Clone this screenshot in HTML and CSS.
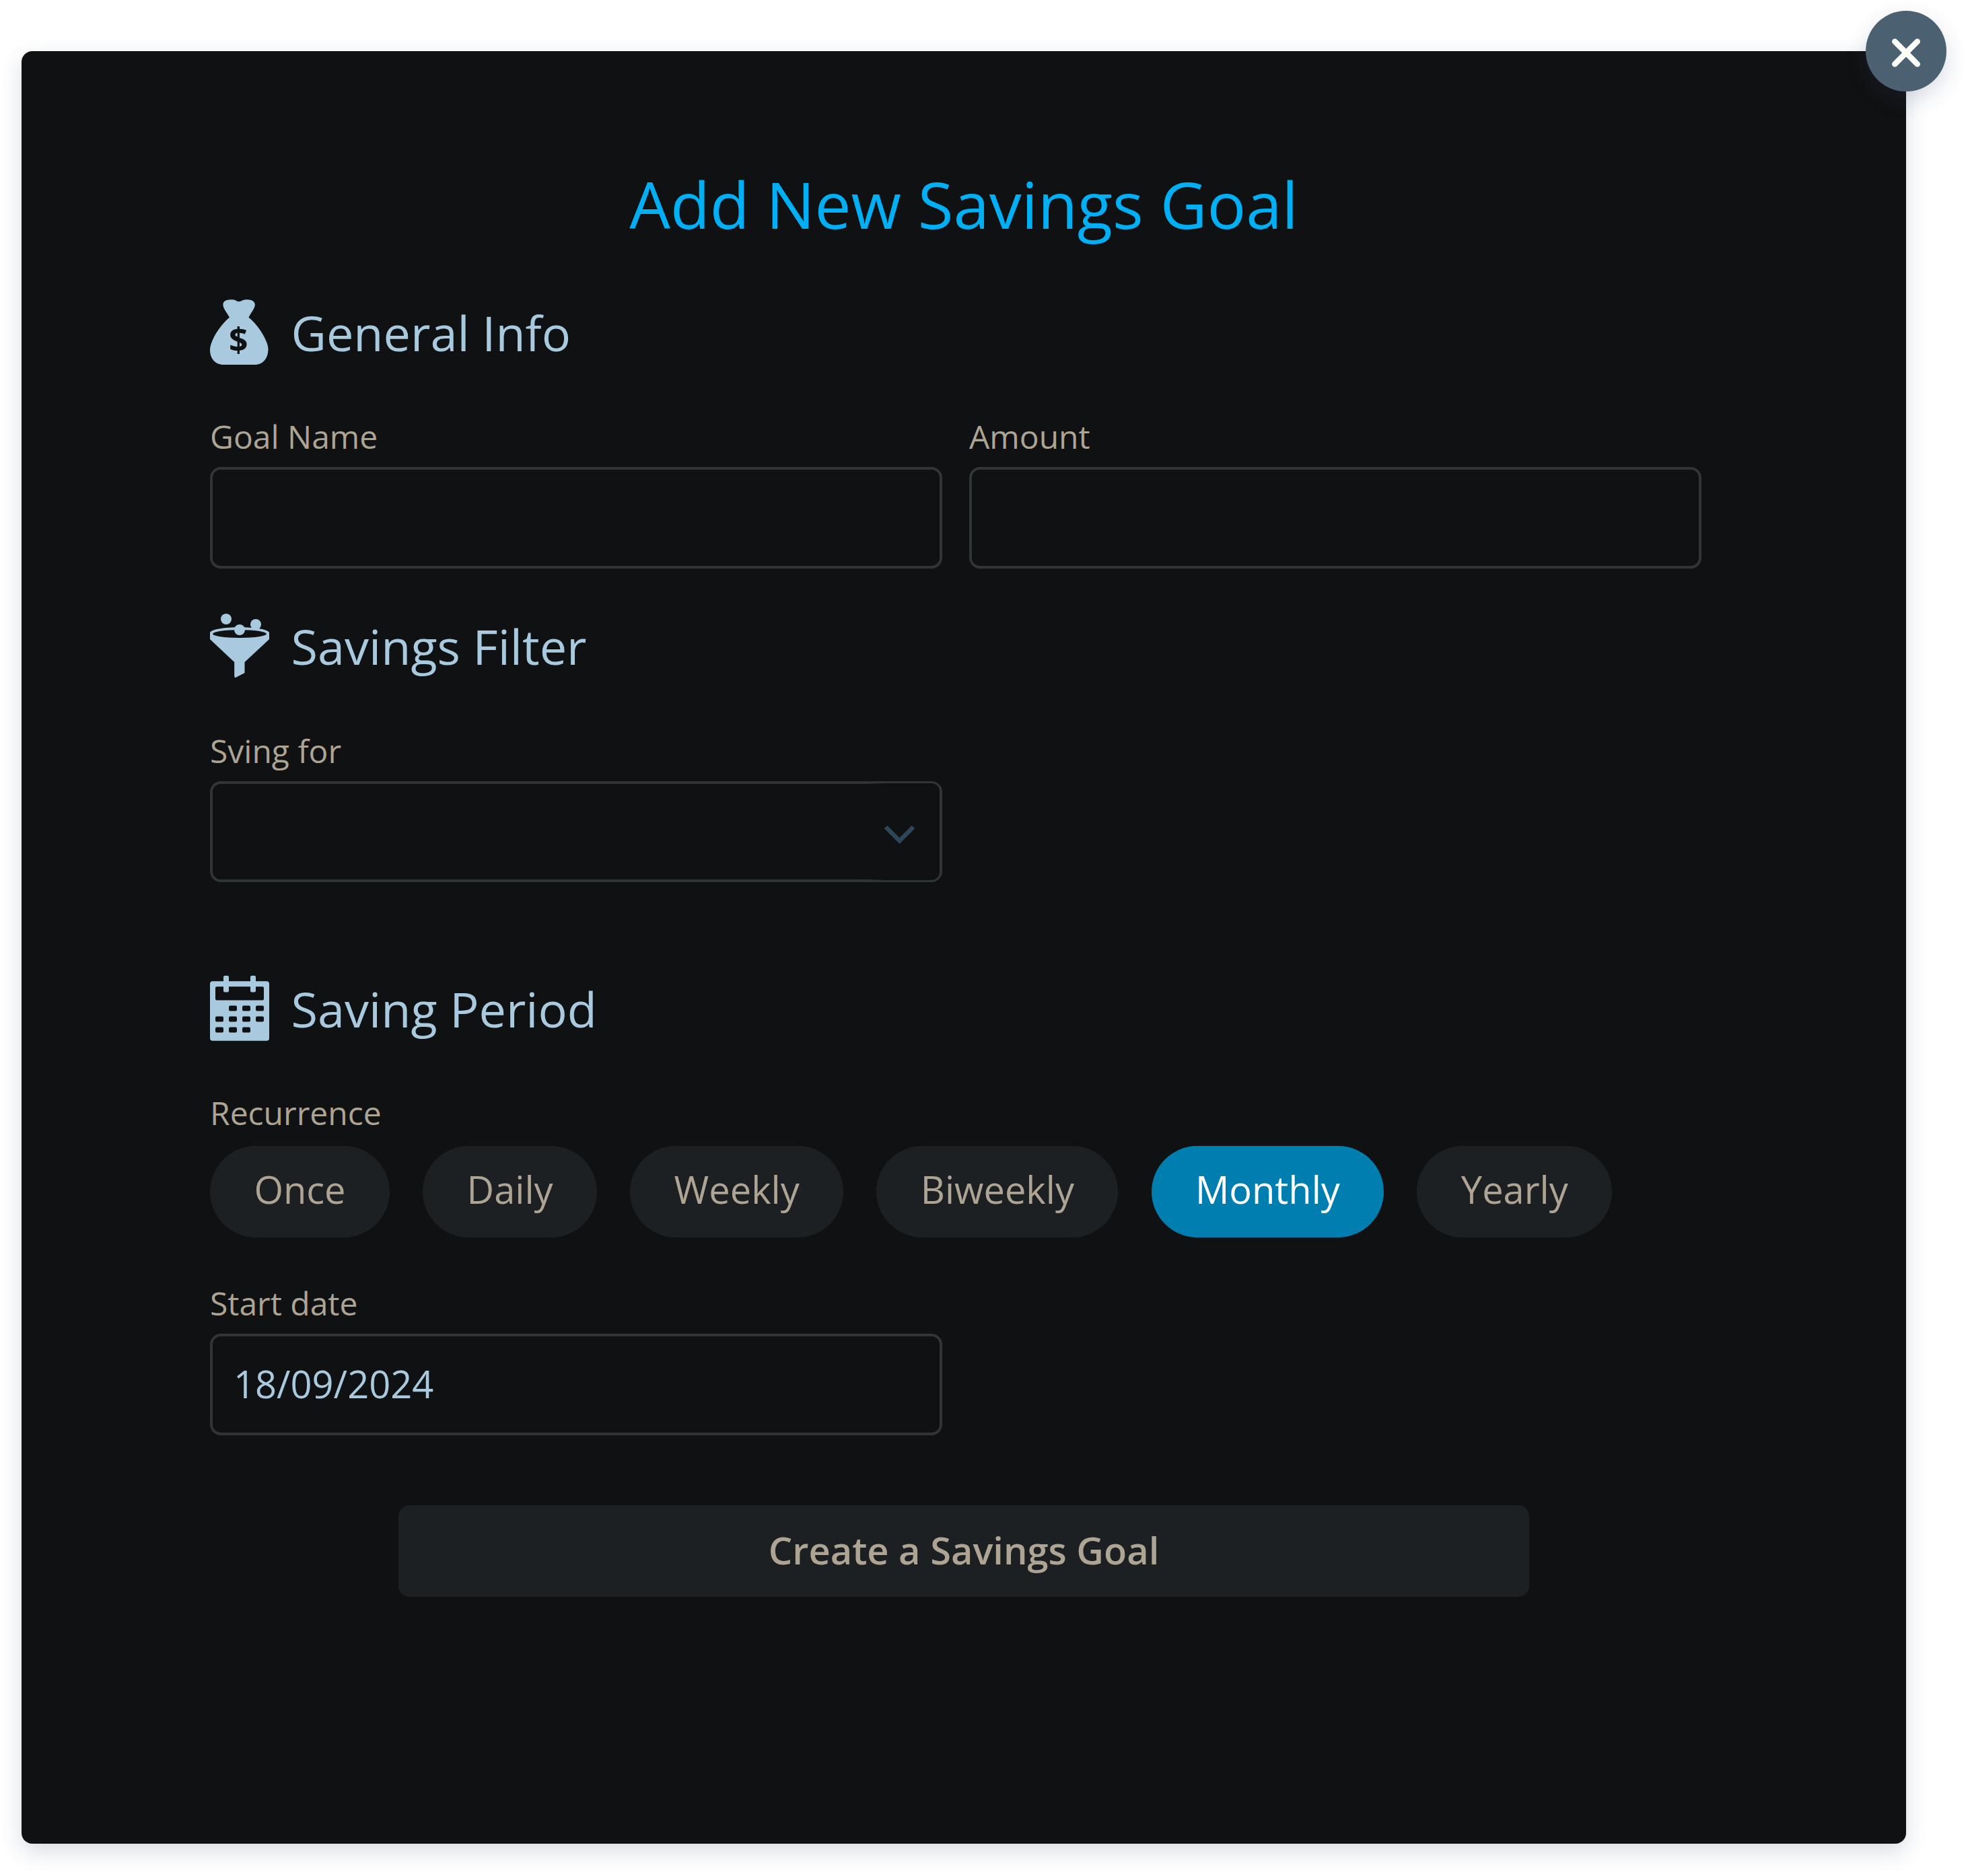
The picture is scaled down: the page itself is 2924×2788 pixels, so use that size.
FILE: index.html
```html
<!DOCTYPE html>
<html lang="en">
<head>
<meta charset="utf-8">
<title>Add New Savings Goal</title>
<link rel="stylesheet" href="styles.css">
</head>
<body>
<main class="modal">
  <button class="close" type="button" aria-label="Close">
    <svg viewBox="0 0 120 120"><path d="M43.3 45.8 76.7 79.2M76.7 45.8 43.3 79.2"/></svg>
  </button>
  <h1 class="title">Add New Savings Goal</h1>

  <section class="section">
    <h2 class="heading">
      <svg class="icon" viewBox="0 0 88 98">
        <path d="M29 26.7C24 18 19.4 13 19.4 7.7C19.4 2 25 0.300 33.5 0.300C38.5 0.300 39 3.3 43.1 3.3C47 3.3 48 0.300 53.1 0.300C61 0.300 66.8 2 66.8 8C66.8 13 62 18 57.5 26.7C72 38 86.5 62 86.5 74C86.5 88 78 97 67 97H20C8 97 0 88 0 75C0 62 14 39 29 26.7Z"/>
        <text class="dollar" x="42.2" y="77.5">$</text>
      </svg>
      General Info
    </h2>
    <div class="fields">
      <label class="field">Goal Name<input class="input" type="text"></label>
      <label class="field">Amount<input class="input" type="text"></label>
    </div>
  </section>

  <section class="section section-filter">
    <h2 class="heading">
      <svg class="icon" viewBox="0 -1 88 98">
        <path fill-rule="evenodd" d="M0 28C4 17.500 84 17.500 88 28V38L51.500 72V88L38 95Q36.200 95 36.200 93V72L0 38ZM4 30A40 6 0 0 0 84 30A40 6 0 0 0 4 30Z"/>
        <circle cx="24" cy="8" r="8"/><circle cx="68" cy="16" r="8"/><circle cx="44" cy="24" r="8"/>
      </svg>
      Savings Filter
    </h2>
    <div class="fields">
      <div class="field">Sving for
        <div class="input select">
          <svg class="chevron" viewBox="0 0 46 28"><path d="M3 3 23.500 23.500 44 3"/></svg>
        </div>
      </div>
    </div>
  </section>

  <section class="section section-period">
    <h2 class="heading">
      <svg class="icon" viewBox="0 0 88 98">
        <path fill-rule="evenodd" d="M4 8.300H84Q88 8.300 88 12.300V92.700Q88 96.700 84 96.700H4Q0 96.700 0 92.700V12.300Q0 8.300 4 8.300ZM10 16.300Q8 16.300 8 18.300V34.500Q8 36.500 10 36.500H78Q80 36.500 80 34.500V18.300Q80 16.300 78 16.300Z"/>
        <rect x="20" width="8" height="24.600" rx="2"/><rect x="60" width="8" height="24.600" rx="2"/>
        <g class="days">
          <rect x="28" y="44.400" width="12" height="8" rx="2"/><rect x="48" y="44.400" width="12" height="8" rx="2"/><rect x="68" y="44.400" width="12" height="8" rx="2"/>
          <rect x="8" y="60.400" width="12" height="8" rx="2"/><rect x="28" y="60.400" width="12" height="8" rx="2"/><rect x="48" y="60.400" width="12" height="8" rx="2"/><rect x="68" y="60.400" width="12" height="8" rx="2"/>
          <rect x="8" y="76.400" width="12" height="8" rx="2"/><rect x="28" y="76.400" width="12" height="8" rx="2"/><rect x="48" y="76.400" width="12" height="8" rx="2"/>
        </g>
      </svg>
      Saving Period
    </h2>
    <div class="recurrence">Recurrence</div>
    <div class="pills">
      <button class="pill" type="button">Once</button>
      <button class="pill" type="button">Daily</button>
      <button class="pill" type="button">Weekly</button>
      <button class="pill" type="button">Biweekly</button>
      <button class="pill active" type="button">Monthly</button>
      <button class="pill" type="button">Yearly</button>
    </div>
    <div class="fields fields-date">
      <label class="field">Start date<input class="input" type="text" value="18/09/2024"></label>
    </div>
  </section>

  <button class="submit" type="button">Create a Savings Goal</button>
</main>
</body>
</html>
```
FILE: styles.css
```css
* { box-sizing: border-box; }

body {
  margin: 0;
  padding: 76px 92px 48px 32px;
  background: #fff;
  font-family: "Open Sans", sans-serif;
}

button, input { font-family: inherit; }

.modal {
  position: relative;
  display: flex;
  flex-direction: column;
  width: 2800px;
  height: 2664px;
  padding: 155px 280px 0;
  border-radius: 16px;
  background: #101112;
  color: #aea494;
  box-shadow: 0 12px 32px rgba(50, 70, 110, 0.19);
}

.close {
  position: absolute;
  top: -60px;
  right: -60px;
  width: 120px;
  height: 120px;
  padding: 0;
  border: 0;
  border-radius: 50%;
  background: #4b6171;
  box-shadow: 0 12px 32px rgba(50, 70, 110, 0.19);
}

.close svg {
  display: block;
  fill: none;
  stroke: #fffefa;
  stroke-width: 8.5;
  stroke-linecap: round;
}

.title {
  margin: 0;
  color: #00aff4;
  font-size: 96px;
  font-weight: 400;
  line-height: 144px;
  text-align: center;
}

.section { margin-top: 65px; }
.section-filter { margin-top: 61px; }
.section-period { margin-top: 134px; }

.heading {
  display: flex;
  align-items: center;
  gap: 32.6px;
  height: 108px;
  margin: 0 0 65px;
  color: #a9cade;
  font-size: 72px;
  font-weight: 400;
}

.section-filter .heading { margin-bottom: 66px; }

.icon {
  width: 88px;
  height: 98px;
  fill: #a9cade;
}

.dollar {
  fill: #101112;
  font-size: 50px;
  font-weight: 700;
  text-anchor: middle;
}

.days { fill: #101112; }

.fields {
  display: flex;
  gap: 40px;
}

.fields-date { margin-top: 62px; }

.field {
  display: block;
  width: 1088px;
  font-size: 48px;
  line-height: 72px;
}

.input {
  display: block;
  width: 100%;
  height: 151px;
  margin-top: 9px;
  padding: 0 31px 3px;
  border: 4px solid #303638;
  border-radius: 16px;
  background: #101112;
  color: #a9cade;
  font-size: 56px;
}

.select {
  position: relative;
  display: flex;
  align-items: center;
  justify-content: flex-end;
  height: 150px;
  padding: 8px 37px 0 0;
}

/* fade behind the chevron, slightly overlapping the border */
.select::before {
  content: "";
  position: absolute;
  top: -1px;
  right: 0;
  bottom: -1px;
  width: 112px;
  border-radius: 0 12px 12px 0;
  background: linear-gradient(to right, rgba(16, 17, 18, 0), #101112 30%);
}

.chevron {
  position: relative;
  width: 46px;
  height: 28px;
  fill: none;
  stroke: #2b4759;
  stroke-width: 6.5;
}

.recurrence {
  font-size: 48px;
  line-height: 72px;
}

.pills {
  display: flex;
  gap: 49.2px;
  margin-top: 13px;
}

.pill {
  height: 136px;
  padding: 0 65.4px 8px;
  border: 0;
  border-radius: 68px;
  background: #1d2022;
  color: #aea494;
  font-size: 56px;
}

.pill.active {
  background: #007eaf;
  color: #fff;
}

.submit {
  align-self: center;
  width: 1680px;
  height: 136px;
  margin-top: 104px;
  padding: 0 0 4px;
  border: 0;
  border-radius: 16px;
  background: #1d2022;
  color: #aea494;
  font-size: 56px;
  font-weight: 600;
}
```
